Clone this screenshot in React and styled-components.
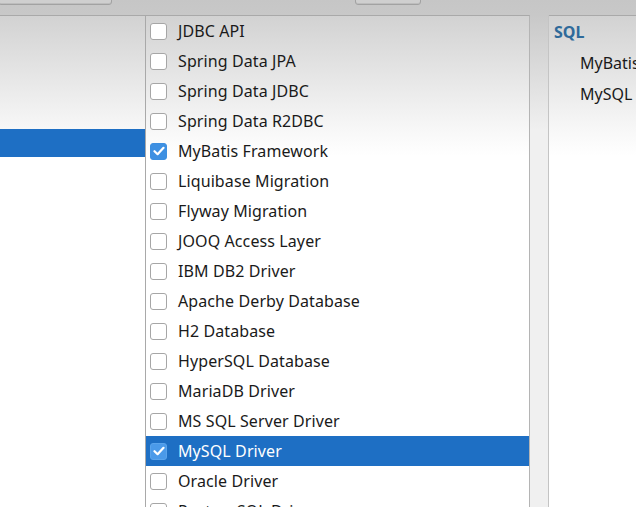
import React from "react";
import styled, { createGlobalStyle } from "styled-components";

const Global = createGlobalStyle`
  html, body { margin: 0; padding: 0; overflow: hidden; }
  body { font-family: "Noto Sans", "Open Sans", sans-serif; background: #c6c6c6; }
  * { box-sizing: border-box; }
`;

const Window = styled.div`
  width: 636px;
  height: 507px;
  display: grid;
  grid-template-rows: 15px 1fr;
  overflow: hidden;
  background: linear-gradient(#c6c6c6 0px, #c8c8c8 15px, #f0f0f0 130px, #f0f0f0 100%);
`;

const Toolbar = styled.div`
  height: 15px;
  overflow: hidden;
`;

const ToolbarRow = styled.div`
  display: flex;
  align-items: flex-end;
  height: 25px;
  margin-top: -20px;
`;

const ToolButton = styled.div`
  width: ${(p) => p.$w}px;
  height: 25px;
  margin-left: ${(p) => p.$ml}px;
  border: 1px solid #a2a2a2;
  border-radius: 3px;
  background: #cfcfcf;
  box-shadow: inset 0 -1px 0 #bdbdbd;
`;

const ToolLabel = styled.div`
  margin-left: ${(p) => p.$ml}px;
  width: ${(p) => p.$w}px;
  font-size: 15px;
  line-height: 20px;
  height: 25px;
  color: #111;
  white-space: nowrap;
`;

const Content = styled.div`
  display: grid;
  grid-template-columns: 146px 384px 19px 1fr;
  min-height: 0;
`;

const panelBg = `linear-gradient(#d2d2d2 0px, #f8f8f8 115px, #ffffff 140px, #ffffff 100%)`;

const NavPanel = styled.div`
  background: ${panelBg};
  border-top: 1px solid #a9a9a9;
  border-right: 1px solid #a9a9a9;
  padding-top: 1px;
  display: flex;
  flex-direction: column;
`;

const NavRow = styled.div`
  height: 28px;
  background: ${(p) => (p.$selected ? "#1e6fc4" : "transparent")};
`;

const ListPanel = styled.div`
  background: ${panelBg};
  border-top: 1px solid #a9a9a9;
  border-right: 1px solid #b4b4b4;
  display: flex;
  flex-direction: column;
`;

const Row = styled.div`
  height: 30px;
  flex: none;
  display: flex;
  align-items: center;
  padding-left: 4px;
  gap: 11px;
  font-size: 16px;
  color: ${(p) => (p.$selected ? "#ffffff" : "#1a1a1a")};
  background: ${(p) => (p.$selected ? "#1e6fc4" : "transparent")};
  white-space: nowrap;
`;

const Box = styled.span`
  width: 17px;
  height: 17px;
  flex: none;
  border-radius: 3px;
  display: inline-flex;
  align-items: center;
  justify-content: center;
  border: 1px solid ${(p) => (p.$checked ? (p.$onBlue ? "#5aa4ec" : "#3d8fe0") : "#a6a6a6")};
  background: ${(p) => (p.$checked ? (p.$onBlue ? "#4b9ae9" : "#3e90e2") : "#ffffff")};
`;

const Label = styled.span`
  line-height: 30px;
  letter-spacing: 0.1px;
`;

const Gap = styled.div`
  border-right: 1px solid #c4c4c4;
`;

const SidePanel = styled.div`
  background: ${panelBg};
  border-top: 1px solid #a9a9a9;
  padding: 5px 0 0 5px;
  display: flex;
  flex-direction: column;
  white-space: nowrap;
  overflow: hidden;
`;

const GroupTitle = styled.div`
  font-size: 16px;
  font-weight: 700;
  color: #2f6a9a;
  line-height: 22px;
  height: 26px;
`;

const Picked = styled.div`
  font-size: 16px;
  color: #1a1a1a;
  padding-left: 26px;
  line-height: 22px;
  height: 31px;
  padding-top: 5px;
`;

const Check = () => (
  <svg width="12" height="10" viewBox="0 0 12 10">
    <path d="M1.5 5.2 L4.6 8.2 L10.5 1.8" fill="none" stroke="#fff" strokeWidth="2.2" strokeLinecap="round" strokeLinejoin="round" />
  </svg>
);

const items = [
  ["JDBC API", false],
  ["Spring Data JPA", false],
  ["Spring Data JDBC", false],
  ["Spring Data R2DBC", false],
  ["MyBatis Framework", true],
  ["Liquibase Migration", false],
  ["Flyway Migration", false],
  ["JOOQ Access Layer", false],
  ["IBM DB2 Driver", false],
  ["Apache Derby Database", false],
  ["H2 Database", false],
  ["HyperSQL Database", false],
  ["MariaDB Driver", false],
  ["MS SQL Server Driver", false],
  ["MySQL Driver", true, true],
  ["Oracle Driver", false],
  ["PostgreSQL Driver", false],
];

export default function App() {
  return (
    <>
      <Global />
      <Window>
        <Toolbar>
          <ToolbarRow>
            <ToolButton $w={114} $ml={-2} />
            <ToolLabel $ml={162} $w={81}>Spring Boot:</ToolLabel>
            <ToolButton $w={66} $ml={0} />
          </ToolbarRow>
        </Toolbar>
        <Content>
          <NavPanel>
            {[0, 1, 2, 3, 4, 5, 6].map((i) => (
              <NavRow key={i} $selected={i === 4} />
            ))}
          </NavPanel>
          <ListPanel>
            {items.map(([name, checked, selected]) => (
              <Row key={name} $selected={selected}>
                <Box $checked={checked} $onBlue={selected}>
                  {checked && <Check />}
                </Box>
                <Label>{name}</Label>
              </Row>
            ))}
          </ListPanel>
          <Gap />
          <SidePanel>
            <GroupTitle>SQL</GroupTitle>
            <Picked>MyBatis Framework</Picked>
            <Picked>MySQL Driver</Picked>
          </SidePanel>
        </Content>
      </Window>
    </>
  );
}
